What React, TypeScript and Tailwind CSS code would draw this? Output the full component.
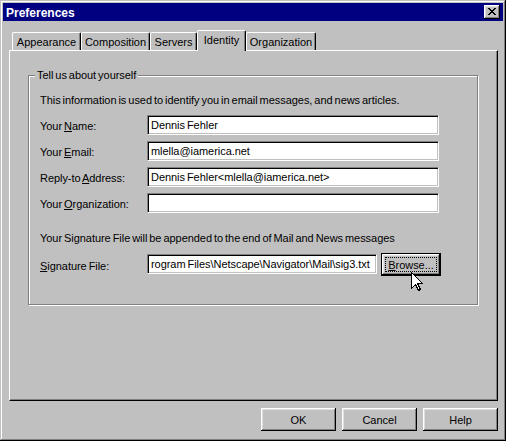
import React from "react";

const closeGlyph = [
  "XX....XX",
  ".XX..XX.",
  "..XXXX..",
  "...XX...",
  "..XXXX..",
  ".XX..XX.",
  "XX....XX",
];

function CloseX() {
  const rects: React.ReactElement[] = [];
  closeGlyph.forEach((row, y) =>
    row.split("").forEach((c, x) => {
      if (c === "X") rects.push(<rect key={`${x}-${y}`} x={x} y={y} width={1} height={1} fill="#000" />);
    })
  );
  return (
    <svg width="8" height="7" viewBox="0 0 8 7" shapeRendering="crispEdges">
      {rects}
    </svg>
  );
}

function Tab({ label, w, selected }: { label: string; w: string; selected?: boolean }) {
  if (selected) {
    return (
      <div
        className={`relative z-10 h-[21px] ${w} bg-[#c0c0c0] border-t border-l border-r border-t-white border-l-white border-r-black rounded-t-[2px] shadow-[inset_-1px_0_#808080] flex justify-center pt-[2px] leading-[14px]`}
      >
        {label}
      </div>
    );
  }
  return (
    <div
      className={`mt-[2px] h-[18px] ${w} bg-[#c0c0c0] border-t border-l border-r border-t-white border-l-white border-r-black rounded-t-[2px] shadow-[inset_-1px_0_#808080] flex justify-center pt-[2px] leading-[14px]`}
    >
      {label}
    </div>
  );
}

function Field({ value, w }: { value: string; w: string }) {
  return (
    <div
      className={`${w} h-[20px] bg-white border border-t-[#808080] border-l-[#808080] border-b-white border-r-white shadow-[inset_1px_1px_#000,inset_-1px_-1px_#c0c0c0] pl-[3px] flex items-center overflow-hidden whitespace-nowrap leading-[14px]`}
    >
      {value}
    </div>
  );
}

function Row({ label, value }: { label: React.ReactNode; value: string }) {
  return (
    <div className="flex items-center h-[20px]">
      <div className="w-[107px] pt-[2px] leading-[14px]">{label}</div>
      <Field value={value} w="w-[292px]" />
    </div>
  );
}

function Button({ children }: { children: React.ReactNode }) {
  return (
    <div className="w-[75px] h-[23px] bg-[#c0c0c0] shadow-[inset_-1px_-1px_#000,inset_1px_1px_#fff,inset_-2px_-2px_#808080,inset_2px_2px_#dfdfdf] flex items-center justify-center leading-[14px]">
      {children}
    </div>
  );
}

export default function App() {
  return (
    <div className="w-[506px] h-[441px] bg-[#c0c0c0] p-[3px] shadow-[inset_-1px_-1px_#000,inset_1px_1px_#c0c0c0,inset_-2px_-2px_#808080,inset_2px_2px_#fff] font-['Liberation_Sans','Arial',sans-serif] text-[11px] text-black flex flex-col">
      {/* Title bar */}
      <div className="h-[18px] bg-[#000080] flex items-center justify-between pl-[3px] pr-[3px]">
        <span className="text-white font-bold text-[12px] leading-[14px] pt-[1px]">Preferences</span>
        <div className="w-[16px] h-[14px] bg-[#c0c0c0] shadow-[inset_-1px_-1px_#000,inset_1px_1px_#fff,inset_-2px_-2px_#808080,inset_2px_2px_#dfdfdf] flex items-center justify-center pb-[1px] pr-[1px]">
          <CloseX />
        </div>
      </div>

      {/* Tabs */}
      <div className="mt-[9px] h-[20px] flex items-start pl-[9px]">
        <Tab label="Appearance" w="w-[69px]" />
        <Tab label="Composition" w="w-[69px]" />
        <Tab label="Servers" w="w-[47px]" />
        <Tab label="Identity" w="w-[49px]" selected />
        <Tab label="Organization" w="w-[70px]" />
      </div>

      {/* Panel */}
      <div className="ml-[6px] w-[489px] h-[351px] border border-t-white border-l-white border-r-black border-b-black shadow-[inset_-1px_-1px_#808080]">
        <div className="relative ml-[18px] mt-[24px] w-[450px] h-[230px] border border-[#808080] shadow-[inset_1px_1px_#fff,1px_1px_#fff] [word-spacing:-1px] tracking-[-0.05px]">
          <div className="absolute left-[6px] -top-[8px] px-[2px] bg-[#c0c0c0] leading-[14px]">Tell us about yourself</div>
          <div className="pl-[11px] pt-[17px]">
            <div className="h-[14px] leading-[14px] whitespace-nowrap">
              This information is used to identify you in email messages, and news articles.
            </div>
            <div className="mt-[8px] flex flex-col gap-[6px]">
              <Row label={<>Your <u>N</u>ame:</>} value="Dennis Fehler" />
              <Row label={<>Your <u>E</u>mail:</>} value="mlella@iamerica.net" />
              <Row label={<>Reply-to <u>A</u>ddress:</>} value="Dennis Fehler<mlella@iamerica.net>" />
              <Row label={<>Your <u>O</u>rganization:</>} value="" />
            </div>
            <div className="mt-[18px] h-[14px] leading-[14px] whitespace-nowrap">
              Your Signature File will be appended to the end of Mail and News messages
            </div>
            <div className="mt-[8px] flex items-start">
              <div className="w-[107px] h-[23px] flex items-center pt-[2px] leading-[14px]">
                <span><u>S</u>ignature File:</span>
              </div>
              <div className="mt-[1px]">
                <Field value="rogram Files\Netscape\Navigator\Mail\sig3.txt" w="w-[230px]" />
              </div>
              <div className="relative ml-[4px] w-[60px] h-[23px] border border-black">
                <div className="w-full h-full bg-[#c0c0c0] shadow-[inset_-1px_-1px_#000,inset_1px_1px_#fff,inset_-2px_-2px_#808080,inset_2px_2px_#dfdfdf] p-[3px]">
                  <div className="w-full h-full border border-dotted border-black flex items-center justify-center leading-[14px]">
                    <span>
                      <u>B</u>rowse...
                    </span>
                  </div>
                </div>
                <svg
                  className="absolute left-[29px] top-[18px]"
                  width="13"
                  height="20"
                  viewBox="0 0 13 20"
                  shapeRendering="crispEdges"
                >
                  <path
                    d="M0.5 0.5 L0.5 16.5 L4.5 12.5 L7.5 18.5 L9.5 17.5 L6.5 11.5 L11.5 11.5 Z"
                    fill="#fff"
                    stroke="#000"
                    strokeWidth="1"
                  />
                </svg>
              </div>
            </div>
          </div>
        </div>
      </div>

      {/* Buttons */}
      <div className="mt-[7px] flex justify-end gap-[6px] pr-[5px]">
        <Button>OK</Button>
        <Button>Cancel</Button>
        <Button>Help</Button>
      </div>
    </div>
  );
}
